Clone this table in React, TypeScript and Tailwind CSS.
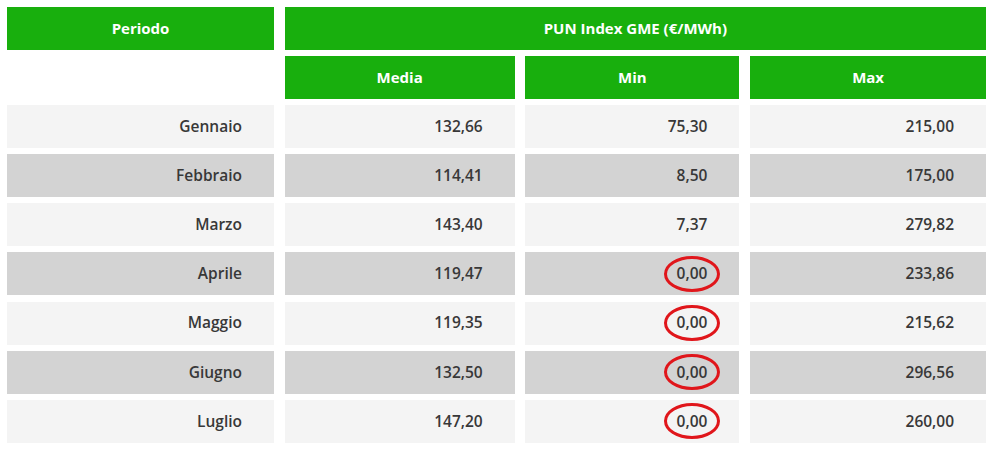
const rows = [
  { periodo: "Gennaio", media: "132,66", min: "75,30", max: "215,00", circled: false },
  { periodo: "Febbraio", media: "114,41", min: "8,50", max: "175,00", circled: false },
  { periodo: "Marzo", media: "143,40", min: "7,37", max: "279,82", circled: false },
  { periodo: "Aprile", media: "119,47", min: "0,00", max: "233,86", circled: true },
  { periodo: "Maggio", media: "119,35", min: "0,00", max: "215,62", circled: true },
  { periodo: "Giugno", media: "132,50", min: "0,00", max: "296,56", circled: true },
  { periodo: "Luglio", media: "147,20", min: "0,00", max: "260,00", circled: true },
];

const head = "bg-[#18af0d] text-white font-bold text-[15px] flex items-center justify-center";
const cell = "flex items-center justify-end pr-[32px] text-[15.5px] font-semibold text-[#383838]";

export default function App() {
  return (
    <div
      className="bg-white w-[992px] h-[451px] pt-[7px] pl-[7px]"
      style={{ fontFamily: '"Open Sans", "Liberation Sans", sans-serif' }}
    >
      <div className="grid grid-cols-[267px_230px_214px_236px] auto-rows-[43px] gap-x-[10.7px] gap-y-[6.1px]">
        <div className={head}>Periodo</div>
        <div className={`${head} col-span-3`}>PUN Index GME (€/MWh)</div>
        <div />
        <div className={head}>Media</div>
        <div className={head}>Min</div>
        <div className={head}>Max</div>
        {rows.map((r, i) => {
          const bg = i % 2 === 0 ? "bg-[#f4f4f4]" : "bg-[#d3d3d3]";
          return [
            <div key={r.periodo + "p"} className={`${cell} ${bg}`}>{r.periodo}</div>,
            <div key={r.periodo + "m"} className={`${cell} ${bg}`}>{r.media}</div>,
            <div key={r.periodo + "n"} className={`${cell} ${bg}`}>
              {r.circled ? (
                <span className="relative">
                  {r.min}
                  <span className="absolute left-1/2 top-1/2 -translate-x-1/2 -translate-y-1/2 w-[56px] h-[36px] rounded-[50%] border-[3.5px] border-[#e0161b]" />
                </span>
              ) : (
                r.min
              )}
            </div>,
            <div key={r.periodo + "x"} className={`${cell} ${bg}`}>{r.max}</div>,
          ];
        })}
      </div>
    </div>
  );
}
